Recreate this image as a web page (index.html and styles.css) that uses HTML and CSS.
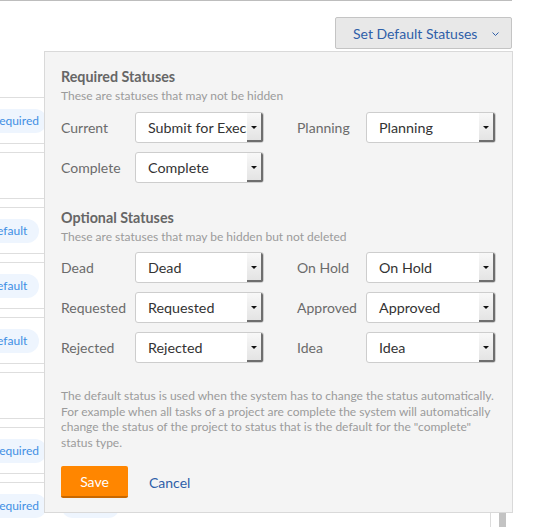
FILE: index.html
```html
<!DOCTYPE html>
<html>
<head>
<meta charset="utf-8">
<link rel="stylesheet" href="styles.css">
</head>
<body>
<div class="page">
  <div class="main">
    <div class="topbar">
      <p class="hint">Drag statuses to reorder them in the menu.</p>
      <button class="defaults-btn">Set Default Statuses
        <svg class="chev" width="9" height="6" viewBox="0 0 9 6"><polyline points="1.5,1.5 4.5,4.5 7.5,1.5" fill="none" stroke="#2f5fa9" stroke-width="1"/></svg>
      </button>
    </div>
    <div class="layout">
      <div class="table">
        <div class="row"><span class="badge req">Required</span></div>
        <div class="row"></div>
        <div class="row"><span class="badge def">Default</span></div>
        <div class="row"><span class="badge def">Default</span></div>
        <div class="row"><span class="badge def">Default</span></div>
        <div class="row"></div>
        <div class="row"><span class="badge req">Required</span></div>
        <div class="row"><span class="badge req">Required</span><span class="badge blank"></span></div>
      </div>
      <div class="scrolltrack"><div class="thumb"></div></div>
    </div>
  </div>

  <div class="panel">
    <h3 class="sec-title">Required Statuses</h3>
    <p class="sec-sub">These are statuses that may not be hidden</p>
    <div class="fields">
      <div class="frow">
        <div class="field f1"><span class="lbl">Current</span><div class="sel"><span class="val">Submit for Execution</span><span class="arrow"></span></div></div>
        <div class="field f2"><span class="lbl">Planning</span><div class="sel"><span class="val">Planning</span><span class="arrow"></span></div></div>
      </div>
      <div class="frow">
        <div class="field f1"><span class="lbl">Complete</span><div class="sel"><span class="val">Complete</span><span class="arrow"></span></div></div>
      </div>
    </div>

    <h3 class="sec-title second">Optional Statuses</h3>
    <p class="sec-sub">These are statuses that may be hidden but not deleted</p>
    <div class="fields tight">
      <div class="frow">
        <div class="field f1"><span class="lbl">Dead</span><div class="sel"><span class="val">Dead</span><span class="arrow"></span></div></div>
        <div class="field f2"><span class="lbl">On Hold</span><div class="sel"><span class="val">On Hold</span><span class="arrow"></span></div></div>
      </div>
      <div class="frow">
        <div class="field f1"><span class="lbl">Requested</span><div class="sel"><span class="val">Requested</span><span class="arrow"></span></div></div>
        <div class="field f2"><span class="lbl">Approved</span><div class="sel"><span class="val">Approved</span><span class="arrow"></span></div></div>
      </div>
      <div class="frow">
        <div class="field f1"><span class="lbl">Rejected</span><div class="sel"><span class="val">Rejected</span><span class="arrow"></span></div></div>
        <div class="field f2"><span class="lbl">Idea</span><div class="sel"><span class="val">Idea</span><span class="arrow"></span></div></div>
      </div>
    </div>

    <p class="desc">The default status is used when the system has to change the status automatically. For example when all tasks of a project are complete the system will automatically change the status of the project to status that is the default for the "complete" status type.</p>

    <div class="actions">
      <button class="save">Save</button>
      <button class="cancel">Cancel</button>
    </div>
  </div>
</div>
</body>
</html>
```
FILE: styles.css
```css
* { box-sizing: border-box; }
html, body { margin: 0; padding: 0; }
body {
  width: 533px;
  height: 527px;
  overflow: hidden;
  background: #fff;
  font-family: Lato, "Liberation Sans", sans-serif;
  color: #333;
}
.page { position: relative; width: 533px; height: 527px; overflow: hidden; }
.main { width: 512px; }
.topbar {
  border-top: 1px solid #bdbdbd;
  height: 97px;
  display: flex;
  align-items: flex-start;
  justify-content: space-between;
  padding-top: 16px;
}
.hint {
  margin: 0 0 0 -254px;
  font-size: 13px;
  line-height: 32px;
  color: #9a9a9a;
  white-space: nowrap;
}
.defaults-btn {
  height: 32px;
  width: 177px;
  margin: 0;
  border: 1px solid #c4c4c4;
  border-radius: 2px;
  background: #e8e8e8;
  color: #2f5fa9;
  font-family: inherit;
  font-size: 14px;
  padding: 0 0 0 17px;
  display: flex;
  align-items: center;
  gap: 14px;
}
.chev { margin-top: 2px; }
.layout { display: flex; }
.table { width: 492px; border-right: 1px solid #dcdcdc; }
.row {
  height: 47px;
  border-top: 1px solid #dedede;
  border-bottom: 1px solid #dedede;
  margin-bottom: 8px;
  display: flex;
  align-items: center;
  gap: 14px;
}
.badge {
  height: 24px;
  line-height: 24px;
  border-radius: 12px;
  background: #eef5fe;
  color: #3f8fe4;
  font-size: 12px;
  white-space: nowrap;
}
.badge.req { margin-left: -20px; padding: 0 8px 0 12px; }
.badge.def { margin-left: -24px; padding: 0 12px; }
.badge.blank { width: 59px; margin-left: 0; }
.scrolltrack { width: 21px; display: flex; justify-content: center; padding-left: 2px; }
.thumb { width: 7px; margin-top: 300px; height: 200px; background: #c3c3c3; }

.panel {
  position: absolute;
  left: 44px;
  top: 51px;
  width: 469px;
  height: 462px;
  background: #f4f4f4;
  border: 1px solid #d9d9d9;
  padding: 16px 15px 0 16px;
}
.sec-title {
  margin: 0;
  font-size: 14.3px;
  line-height: 18px;
  font-weight: 700;
  color: #666;
}
.sec-title.second { margin-top: 26px; }
.sec-sub {
  margin: 2px 0 0;
  font-size: 12px;
  line-height: 15px;
  color: #9b9b9b;
}
.fields { margin-top: 9px; display: flex; flex-direction: column; gap: 9px; }
.fields.tight { margin-top: 8px; }
.frow { display: flex; gap: 33px; }
.field { display: flex; align-items: center; }
.f1 .lbl { width: 74px; }
.f1 .sel { width: 129px; }
.f2 .lbl { width: 69px; }
.f2 .sel { width: 130px; }
.lbl { font-size: 14px; color: #6b6b6b; white-space: nowrap; }
.sel {
  height: 31px;
  background: #fff;
  border: 1px solid #cdcdcd;
  border-radius: 3px;
  display: flex;
  align-items: stretch;
  overflow: hidden;
}
.val {
  flex: 1;
  min-width: 0;
  padding-left: 12px;
  font-size: 14.3px;
  line-height: 29px;
  color: #333;
  white-space: nowrap;
  overflow: hidden;
}
.arrow {
  width: 16px;
  flex: none;
  background: linear-gradient(#f8f8f8, #e4e4e4);
  border-right: 2px solid #6e6e6e;
  border-bottom: 2px solid #6e6e6e;
  display: flex;
  align-items: center;
  justify-content: center;
}
.arrow::after {
  content: "";
  border-left: 3px solid transparent;
  border-right: 3px solid transparent;
  border-top: 3px solid #111;
  margin-top: 1px;
}
.desc {
  margin: 25px 0 0;
  font-size: 12px;
  line-height: 15.6px;
  color: #9b9b9b;
}
.actions { margin-top: 16px; display: flex; align-items: center; gap: 21px; }
.save {
  width: 67px;
  height: 32px;
  margin: 0;
  background: #ff8600;
  border: none;
  border-bottom: 2px solid #c96800;
  border-radius: 2px;
  color: #fff;
  font-family: inherit;
  font-size: 14px;
  padding: 0;
}
.cancel {
  background: none;
  border: none;
  padding: 0;
  margin: 0;
  color: #2f5fa9;
  font-family: inherit;
  font-size: 14px;
}
```
